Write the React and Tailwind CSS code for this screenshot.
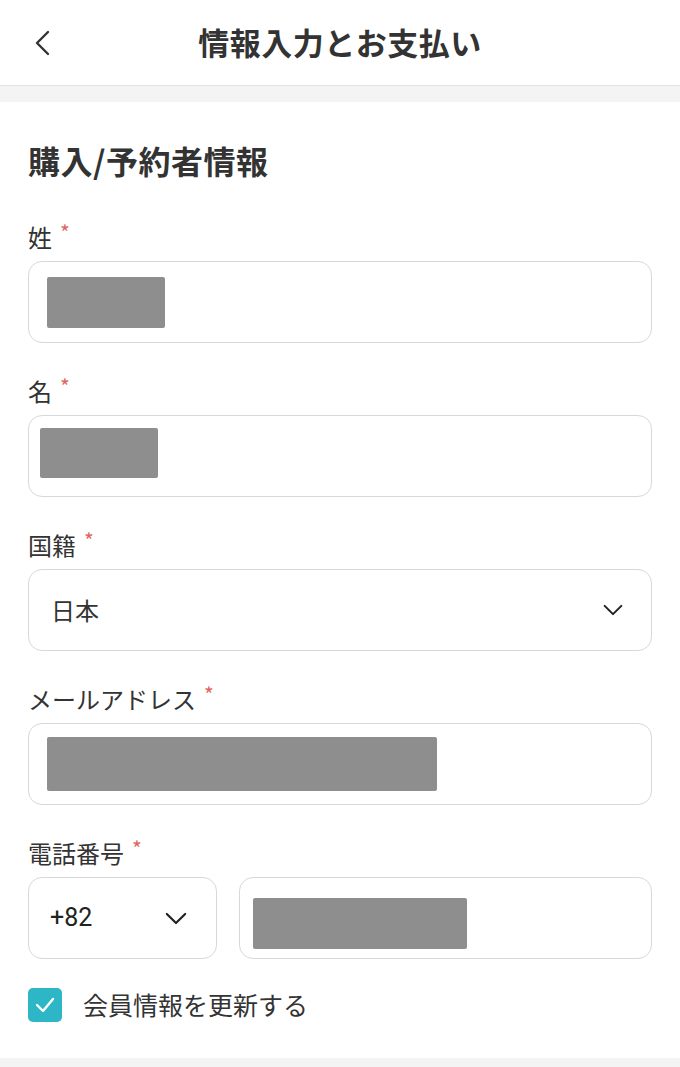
import React from "react";

const font = { fontFamily: '"Noto Sans CJK JP", "Noto Sans", sans-serif' };

function Chevron({ className }) {
  return (
    <svg className={className} viewBox="0 0 24 14" fill="none" stroke="#222" strokeWidth="2.4" strokeLinecap="round" strokeLinejoin="round">
      <path d="M2 2 L12 12 L22 2" />
    </svg>
  );
}

function Label({ children }) {
  return (
    <div className="h-[32px] flex items-center text-[24px] text-[#333] leading-none mb-[8px]">
      <span>{children}</span>
      <span className="text-[#e0655c] text-[21px] ml-[8px] self-start mt-[1px]">*</span>
    </div>
  );
}

function Box({ children, className = "" }) {
  return (
    <div className={`h-[82px] border-[1.5px] border-[#d8d8d8] rounded-[14px] bg-white flex items-center ${className}`}>
      {children}
    </div>
  );
}

function Blob({ className }) {
  return <div className={`bg-[#8e8e8e] blur-[0.6px] rounded-[2px] ${className}`} />;
}

export default function App() {
  return (
    <div className="w-[680px] h-[1067px] bg-white overflow-hidden" style={font}>
      <header className="h-[86px] border-b-[1.5px] border-[#e4e4e4] flex items-center relative">
        <svg className="absolute left-[34px] top-[30px] w-[18px] h-[26px]" viewBox="0 0 18 26" fill="none" stroke="#333" strokeWidth="2.4" strokeLinecap="round" strokeLinejoin="round">
          <path d="M14 2 L3 13 L14 24" />
        </svg>
        <h1 className="w-full text-center text-[31px] font-bold text-[#333] tracking-[0.5px]">情報入力とお支払い</h1>
      </header>
      <div className="h-[16px] bg-[#f4f4f4]" />
      <section className="px-[28px] pt-[38px] pb-[36px]">
        <h2 className="h-[40px] leading-[40px] text-[32px] font-bold text-[#333] mb-[41px] tracking-[0.5px]">購入/予約者情報</h2>
        <div className="flex flex-col gap-[32px]">
          <div>
            <Label>姓</Label>
            <Box className="pl-[18px]">
              <Blob className="w-[118px] h-[51px]" />
            </Box>
          </div>
          <div>
            <Label>名</Label>
            <Box className="pl-[11px]">
              <Blob className="w-[118px] h-[50px] mb-[6px]" />
            </Box>
          </div>
          <div>
            <Label>国籍</Label>
            <Box className="pl-[22px] pr-[28px] justify-between">
              <span className="text-[24px] text-[#333]">日本</span>
              <Chevron className="w-[20px] h-[12px]" />
            </Box>
          </div>
          <div>
            <Label>メールアドレス</Label>
            <Box className="pl-[18px]">
              <Blob className="w-[390px] h-[54px]" />
            </Box>
          </div>
          <div>
            <Label>電話番号</Label>
            <div className="flex gap-[22px]">
              <Box className="w-[189px] pl-[21px] pr-[29px] justify-between shrink-0">
                <span className="text-[25px] text-[#222]" style={{ fontFamily: 'Roboto, "Noto Sans", sans-serif' }}>+82</span>
                <Chevron className="w-[22px] h-[13px]" />
              </Box>
              <Box className="flex-1 pl-[13px]">
                <Blob className="w-[214px] h-[51px] mt-[10px]" />
              </Box>
            </div>
          </div>
        </div>
        <div className="flex items-center mt-[29px] h-[34px]">
          <div className="w-[34px] h-[34px] rounded-[5px] bg-[#2cb6c6] flex items-center justify-center">
            <svg className="w-[20px] h-[16px]" viewBox="0 0 20 16" fill="none" stroke="white" strokeWidth="2.4" strokeLinecap="round" strokeLinejoin="round">
              <path d="M2 8 L8 14 L18 2" />
            </svg>
          </div>
          <span className="ml-[21px] text-[25px] text-[#333]">会員情報を更新する</span>
        </div>
      </section>
      <div className="h-[20px] bg-[#f4f4f4]" />
    </div>
  );
}
